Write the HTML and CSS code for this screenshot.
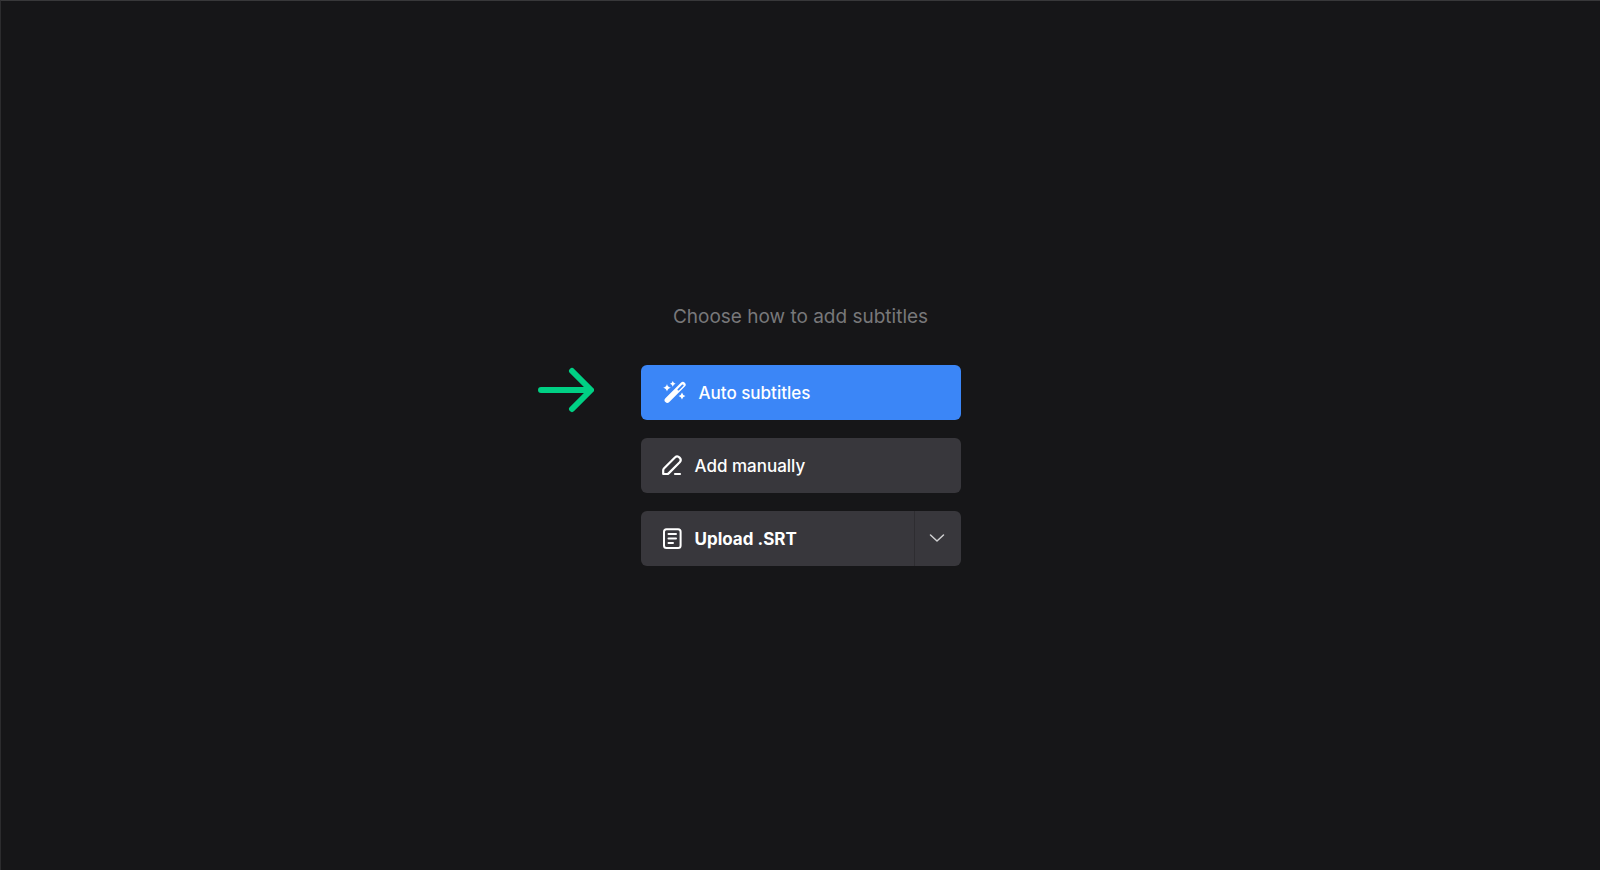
FILE: index.html
```
<!DOCTYPE html>
<html lang="en">
<head>
    <meta charset="UTF-8">
    <meta name="viewport" content="width=device-width, initial-scale=1.0">
    <title>Subtitles</title>
    <link rel="stylesheet" href="styles.css">
</head>
<body>
    <main class="panel">
        <div class="chooser">
            <h1 class="title">Choose how to add subtitles</h1>

            <div class="options">
                <div class="option">
                    <!-- pointer to the suggested option -->
                    <svg class="pointer" width="56" height="46" viewBox="0 0 56 46" fill="none" stroke="#00d084" stroke-width="6" stroke-linecap="round" stroke-linejoin="round" aria-hidden="true">
                        <path d="M3 23H51M34 4L53 23L34 42"/>
                    </svg>
                    <button type="button" class="btn btn-primary">
                        <svg class="icon" width="26" height="24" viewBox="-2 0 26 24" fill="#fff" aria-hidden="true">
                            <path fill-rule="evenodd" d="M17.9 1.7a2.75 2.75 0 0 1 3.9 3.9L6.3 21.1a2.75 2.75 0 0 1-3.9-3.9ZM19 3.8L14.8 8a.9.9 0 0 0 1.3 1.3L20.3 5.1a.9.9 0 0 0-1.3-1.3Z"/>
                            <path d="M4 2.9Q4.6 6.1 7.9 6.7Q4.6 7.3 4 10.6Q3.3 7.3 .2 6.7Q3.3 6.1 4 2.9Z"/>
                            <path d="M9.8 0Q10.3 2.3 12.6 2.8Q10.3 3.3 9.8 5.7Q9.2 3.3 7 2.8Q9.2 2.3 9.8 0Z"/>
                            <path d="M19 11.6Q19.6 14.4 22.4 15Q19.6 15.6 19 18.5Q18.3 15.6 15.6 15Q18.3 14.4 19 11.6Z"/>
                        </svg>
                        <span>Auto subtitles</span>
                    </button>
                </div>

                <div class="option">
                    <button type="button" class="btn">
                        <svg class="icon" width="22" height="22" viewBox="0 0 22 22" fill="none" stroke="#fff" stroke-width="2.2" stroke-linecap="round" stroke-linejoin="round" aria-hidden="true">
                            <path d="M2.2 19V15.2Q2.2 14.2 2.9 13.5L13.9 2.5A3.4 3.4 0 0 1 18.7 7.3L7.9 18.1Q7 19 6 19Z"/>
                            <path d="M14 19H19"/>
                        </svg>
                        <span>Add manually</span>
                    </button>
                </div>

                <div class="option">
                    <button type="button" class="btn btn-upload">
                        <svg class="icon" width="22" height="22" viewBox="0 0 22 22" fill="none" stroke="#fff" stroke-width="2" stroke-linecap="round" aria-hidden="true">
                            <rect x="3" y="1.2" width="16.6" height="18.8" rx="2.5"/>
                            <path d="M7.5 6H15M7.5 10.5H15M7.5 15H12"/>
                        </svg>
                        <span>Upload .SRT</span>
                    </button>
                    <button type="button" class="btn btn-more" aria-label="More upload options">
                        <svg width="18" height="12" viewBox="0 0 18 12" fill="none" stroke="#d0d0d2" stroke-width="1.5" stroke-linecap="round" stroke-linejoin="round" aria-hidden="true">
                            <path d="M1.5 2L8 8L14.5 2"/>
                        </svg>
                    </button>
                </div>
            </div>
        </div>
    </main>
</body>
</html>
```

FILE: styles.css
```
:root {
    --background-color: #161618;
    --border-color: #2c2c2e;
    --primary-color: #3b86f7;
    --button-color: #38373c;
    --muted-color: #78787a;
}

* {
    box-sizing: border-box;
    margin: 0;
    padding: 0;
}

body {
    font-family: Inter, "Liberation Sans", sans-serif;
    color: #fff;
    background-color: var(--background-color);
}

.panel {
    display: flex;
    align-items: center;
    justify-content: center;
    min-height: 100vh;
    border-top: 1px solid #38383a;
    border-left: 1px solid var(--border-color);
}

.chooser {
    width: 320px;
}

.title {
    margin-bottom: 36px;
    font-size: 19px;
    font-weight: 400;
    line-height: 24px;
    text-align: center;
    color: var(--muted-color);
}

.options {
    display: flex;
    flex-direction: column;
    gap: 18px;
}

.option {
    position: relative;
    display: flex;
}

.pointer {
    position: absolute;
    top: 2px;
    right: 100%;
    margin-right: 47px;
}

.btn {
    display: flex;
    flex: 1;
    align-items: center;
    gap: 12px;
    height: 55px;
    padding: 0 20px;
    border: none;
    border-radius: 6px;
    background-color: var(--button-color);
    color: inherit;
    font-family: inherit;
    font-size: 17px;
    font-weight: 500;
    line-height: 24px;
    cursor: pointer;
}

.btn-primary {
    background-color: var(--primary-color);
}

.btn-upload {
    border-radius: 6px 0 0 6px;
    font-weight: 700;
}

.btn-more {
    flex: 0 0 47px;
    justify-content: center;
    padding: 0;
    border-left: 1px solid #2e2d31;
    border-radius: 0 6px 6px 0;
}

.icon {
    flex-shrink: 0;
}
```
